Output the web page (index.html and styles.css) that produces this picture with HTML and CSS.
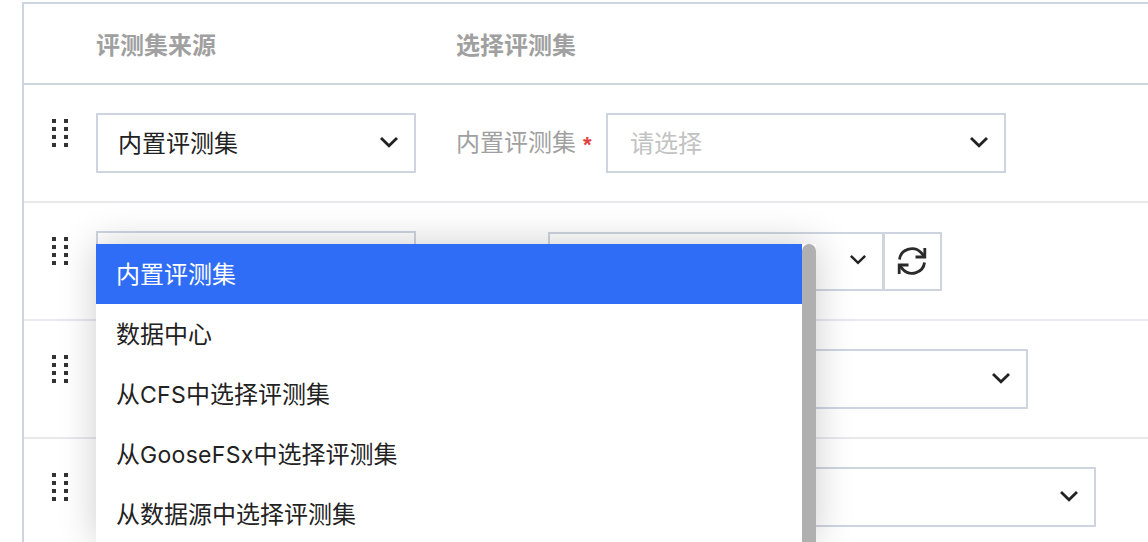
FILE: index.html
```html
<!DOCTYPE html>
<html lang="zh-CN">
<head>
<meta charset="utf-8">
<title>评测集</title>
<link rel="stylesheet" href="styles.css">
</head>
<body>
<svg class="defs" width="0" height="0" aria-hidden="true">
  <symbol id="chev" viewBox="0 0 18 12"><path d="M1 2 9 9.800 17 2" fill="none" stroke="currentColor" stroke-width="2.800"/></symbol>
  <symbol id="grip" viewBox="0 0 16 28"><g fill="currentColor"><rect x="0" y="0" width="4" height="4"/><rect x="12" y="0" width="4" height="4"/><rect x="0" y="8" width="4" height="4"/><rect x="12" y="8" width="4" height="4"/><rect x="0" y="16" width="4" height="4"/><rect x="12" y="16" width="4" height="4"/><rect x="0" y="24" width="4" height="4"/><rect x="12" y="24" width="4" height="4"/></g></symbol>
</svg>
<main class="table">
  <div class="row head">
    <div class="grip-cell"></div>
    <div class="col-source">评测集来源</div>
    <div class="col-pick">选择评测集</div>
  </div>
  <div class="row">
    <div class="grip-cell"><svg class="grip"><use href="#grip"/></svg></div>
    <div class="col-source">
      <div class="select source"><span class="value">内置评测集</span><svg class="chev"><use href="#chev"/></svg></div>
    </div>
    <div class="col-pick">
      <span class="label">内置评测集</span><span class="star">*</span>
      <div class="select w400 placeholder"><span class="value">请选择</span><svg class="chev"><use href="#chev"/></svg></div>
    </div>
  </div>
  <div class="row">
    <div class="grip-cell"><svg class="grip"><use href="#grip"/></svg></div>
    <div class="col-source">
      <div class="select source"></div>
    </div>
    <div class="col-pick indent-a">
      <div class="select w336 joined"><span class="value"></span><svg class="chev small"><use href="#chev"/></svg></div>
      <button class="refresh" type="button" aria-label="刷新">
        <svg class="refresh-icon" viewBox="0 0 30 30" width="30" height="30"><g fill="none" stroke="currentColor" stroke-width="2.800"><path d="M2.500 13.500A12.500 12 0 0 1 24 6.500l3 3.500"/><path d="M27.500 16.500A12.500 12 0 0 1 6 23.500L3 20"/><path d="M27.800 2v9H18.500"/><path d="M2.200 28V19H11.500"/></g></svg>
      </button>
    </div>
  </div>
  <div class="row">
    <div class="grip-cell"><svg class="grip"><use href="#grip"/></svg></div>
    <div class="col-source">
      <div class="select source"></div>
    </div>
    <div class="col-pick indent-b">
      <div class="select w400"><span class="value"></span><svg class="chev"><use href="#chev"/></svg></div>
    </div>
  </div>
  <div class="row">
    <div class="grip-cell"><svg class="grip"><use href="#grip"/></svg></div>
    <div class="col-source">
      <div class="select source"></div>
    </div>
    <div class="col-pick indent-c">
      <div class="select w400"><span class="value"></span><svg class="chev"><use href="#chev"/></svg></div>
    </div>
  </div>
</main>
<div class="dropdown">
  <ul class="options">
    <li class="active">内置评测集</li>
    <li>数据中心</li>
    <li>从<span class="latin">CFS</span>中选择评测集</li>
    <li>从<span class="latin">GooseFSx</span>中选择评测集</li>
    <li>从数据源中选择评测集</li>
  </ul>
  <div class="scrollbar"></div>
</div>
</body>
</html>
```
FILE: styles.css
```css
html, body {
  margin: 0;
  padding: 0;
  height: 542px;
  overflow: hidden;
  background: #fff;
}
body {
  position: relative;
  font-family: "Noto Sans CJK SC", sans-serif;
  font-size: 24px;
  color: #222;
  padding: 2px 0 0 22px;
  box-sizing: border-box;
}
.defs { position: absolute; }
.table {
  width: 1300px;
  border: 2px solid #cfd5e0;
  border-bottom: 0;
  border-right: 0;
}
.row {
  display: flex;
  align-items: center;
  height: 116px;
  border-bottom: 2px solid #e7e9ef;
}
.row.head {
  height: 79px;
  border-bottom: 2px solid #cfd5e0;
  color: #a0a0a0;
  font-weight: 700;
}
.grip-cell {
  width: 72px;
  flex: none;
  align-self: flex-start;
  padding-top: 34px;
  padding-left: 28px;
  box-sizing: border-box;
  color: #333;
}
.head .grip-cell { padding: 0; }
.grip { display: block; width: 16px; height: 28px; }
.col-source { width: 360px; flex: none; }
.col-pick { display: flex; align-items: center; flex: none; }
.indent-a { margin-left: 92px; }
.indent-b { margin-left: 172px; }
.indent-c { margin-left: 240px; }
.label { color: #a0a0a0; margin-bottom: 6px; }
.star {
  color: #e0403f;
  font-family: "Liberation Sans", sans-serif;
  font-size: 22px;
  font-weight: 700;
  line-height: 24px;
  width: 30px;
  padding-left: 7px;
  box-sizing: border-box;
  margin-top: 4px;
}
.select {
  display: flex;
  align-items: center;
  justify-content: space-between;
  height: 60px;
  box-sizing: border-box;
  border: 2px solid #cfd5e0;
  padding: 0 16px 0 20px;
  white-space: nowrap;
}
.value { margin-bottom: 4px; }
.source { width: 320px; }
.w400 { width: 400px; }
.w336 { width: 336px; padding-right: 16px; }
.joined { height: 59px; }
.placeholder { color: #c2c2c2; padding-left: 22px; }
.chev { width: 18px; height: 12px; flex: none; color: #222; margin-top: -3px; }
.chev.small { width: 16px; height: 11px; }
.refresh {
  width: 59px;
  height: 59px;
  margin-left: -1px;
  padding: 0;
  display: flex;
  align-items: center;
  justify-content: center;
  background: #fff;
  border: 2px solid #cfd5e0;
  color: #2a2a2a;
}
.refresh-icon { margin-left: -2px; }
.dropdown {
  position: absolute;
  left: 96px;
  top: 244px;
  width: 720px;
  height: 298px;
  display: flex;
  background: #fff;
  box-shadow: 0 0 36px rgba(0, 0, 0, 0.2);
}
.options {
  list-style: none;
  margin: 0;
  padding: 0;
  width: 706px;
  flex: none;
}
.options li {
  height: 60px;
  line-height: 58px;
  padding-left: 20px;
  color: #222;
}
.options li.active { background: #2f6df6; color: #fff; }
.latin { font-family: Inter, sans-serif; font-size: 23px; letter-spacing: 0.3px; }
.scrollbar {
  width: 14px;
  flex: none;
  background: #b0b0b0;
  border-radius: 7px 7px 0 0;
}
```
